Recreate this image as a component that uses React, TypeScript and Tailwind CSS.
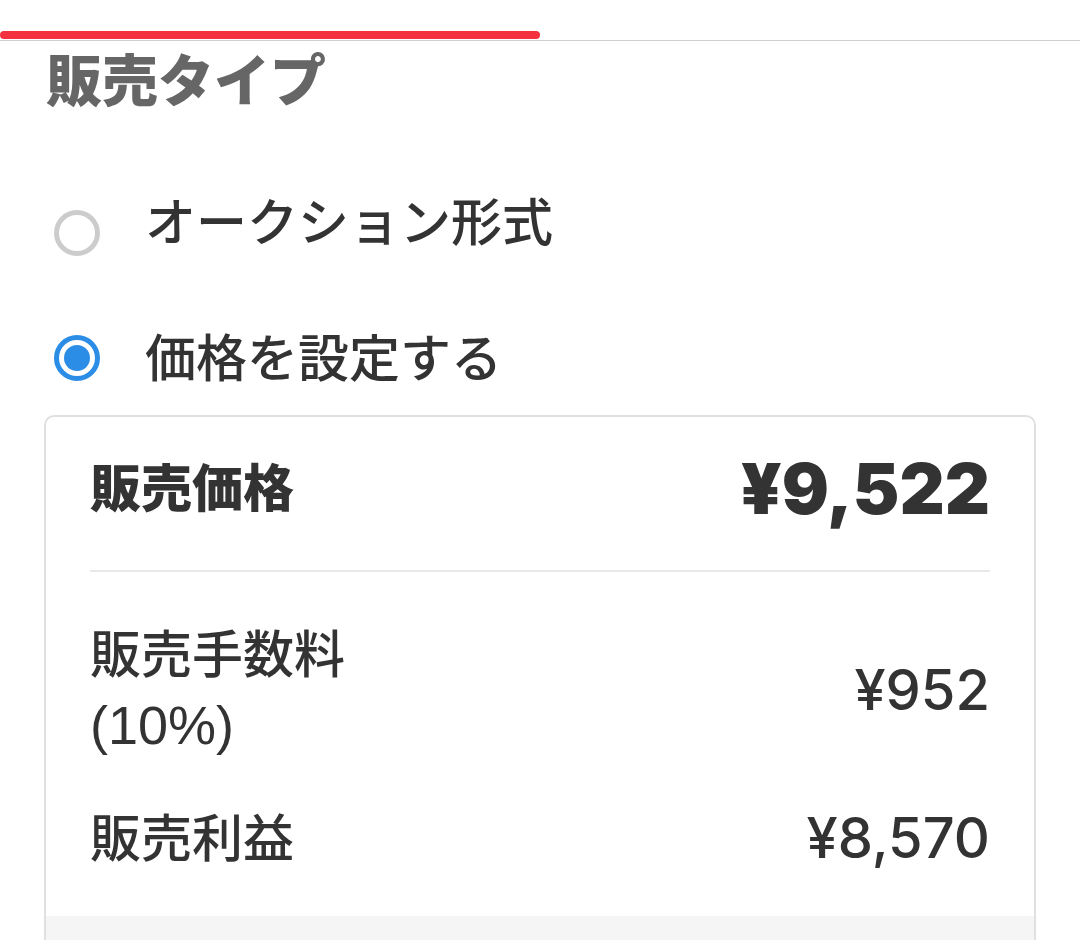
import React from "react";

const font = { fontFamily: 'Inter, "Noto Sans CJK JP", "Noto Sans", sans-serif' };

function Radio({ checked }: { checked: boolean }) {
  if (checked) {
    return (
      <span className="flex h-[46px] w-[46px] items-center justify-center rounded-full border-[5px] border-[#2b8de6] bg-white">
        <span className="h-[26px] w-[26px] rounded-full bg-[#2b8de6]" />
      </span>
    );
  }
  return <span className="block h-[46px] w-[46px] rounded-full border-[5px] border-[#cccccc] bg-white" />;
}

export default function App() {
  return (
    <div className="h-[940px] w-[1080px] overflow-hidden bg-white text-[#333333]" style={font}>
      <div className="h-[41px] border-b border-[#d0d0d0] pt-[31px]">
        <div className="h-[8px] w-[540px] rounded-full bg-[#f4313f]" />
      </div>

      <div className="flex h-[80px] items-center pl-[46px]">
        <h2 className="text-[56px] font-black leading-none text-[#666666]">販売タイプ</h2>
      </div>

      <div className="mt-[51px] flex h-[100px] items-center">
        <div className="ml-[54px] mt-[22px]">
          <Radio checked={false} />
        </div>
        <span className="ml-[45px] text-[51px] font-medium leading-none">オークション形式</span>
      </div>

      <div className="mt-[36px] flex h-[100px] items-center">
        <div className="ml-[54px]">
          <Radio checked />
        </div>
        <span className="ml-[45px] text-[51px] font-medium leading-none">価格を設定する</span>
      </div>

      <div className="mx-[44px] mt-[7px] overflow-hidden rounded-[10px] border-2 border-[#e0e0e0]">
        <div className="px-[44px]">
          <div className="flex h-[155px] items-center justify-between border-b-2 border-[#e8e8e8] pb-[10px]">
            <span className="text-[51px] font-black leading-none">販売価格</span>
            <span className="text-[70px] font-black leading-none">¥9,522</span>
          </div>

          <div className="flex h-[226px] items-center justify-between pt-[10px]">
            <div className="text-[51px] font-medium leading-[70px]">
              <div>販売手数料</div>
              <div className="text-[54px] [font-family:'Liberation_Sans',sans-serif]">(10%)</div>
            </div>
            <span className="text-[56px] font-medium leading-none">¥952</span>
          </div>

          <div className="flex h-[80px] items-center justify-between">
            <span className="text-[51px] font-medium leading-none">販売利益</span>
            <span className="text-[56px] font-medium leading-none">¥8,570</span>
          </div>
        </div>
        <div className="mt-[38px] h-[60px] bg-[#f5f5f5]" />
      </div>
    </div>
  );
}
